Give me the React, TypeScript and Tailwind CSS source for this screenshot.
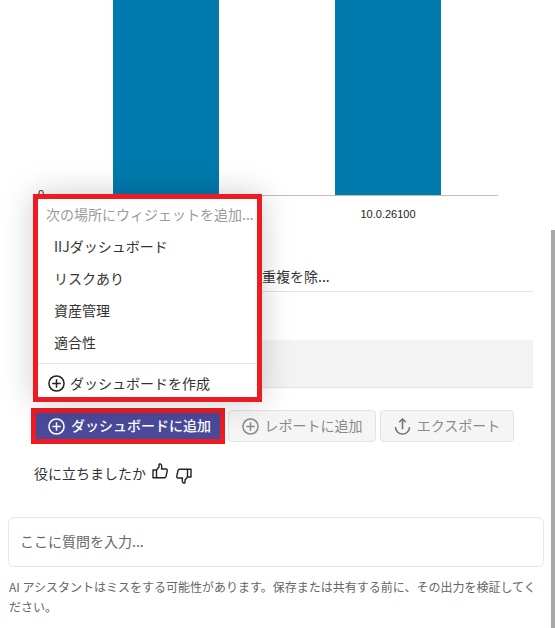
const jp = { fontFamily: '"Noto Sans CJK JP", "Liberation Sans", sans-serif' };

function PlusCircle({ className }: { className: string }) {
  return (
    <svg viewBox="0 0 18 18" fill="none" stroke="currentColor" strokeWidth="1.6" className={className}>
      <circle cx="9" cy="9" r="8" />
      <path d="M9 4.5v9M4.5 9h9" />
    </svg>
  );
}

function UploadIcon({ className }: { className: string }) {
  return (
    <svg viewBox="0 0 18 18" fill="none" stroke="currentColor" strokeWidth="1.7" className={className}>
      <path d="M5.5 4.5 9 1l3.5 3.5M9 1.5V12" />
      <path d="M1.5 9.5a7.5 7.5 0 0 0 15 0" />
    </svg>
  );
}

function Thumb({ className }: { className: string }) {
  return (
    <svg viewBox="0 0 16 16" fill="none" stroke="currentColor" strokeWidth="1.4" strokeLinejoin="round" className={className}>
      <path d="M1 7h3.5v7.7H1z" />
      <path d="M4.5 7 7 4V1.8C7 1 8 .7 8.8 1.2c1 .7 1.2 2.3.7 4.8H14c1 0 1.4.9 1.2 1.8L14 13.5c-.2.8-.7 1.2-1.5 1.2h-8" />
    </svg>
  );
}

function Chart() {
  return (
    <div className="relative h-[222px] shrink-0">
      <div className="absolute left-[38px] top-[187px] text-[11px] leading-[14px] text-[#222]" style={{ fontFamily: '"Liberation Sans", sans-serif' }}>
        0
      </div>
      <div className="ml-[40px] flex h-[196px] w-[458px] border-b border-[#bdbdbd]">
        <div className="ml-[73px] h-full w-[106px] bg-[#0079ad]" />
        <div className="ml-[116px] h-full w-[106px] bg-[#0079ad]" />
      </div>
      <div className="ml-[335px] mt-[11px] w-[106px] text-center text-[11px] leading-[14px] text-[#222]" style={{ fontFamily: '"Liberation Sans", sans-serif' }}>
        10.0.26100
      </div>
    </div>
  );
}

function AddMenu() {
  const items = ['IIJダッシュボード', 'リスクあり', '資産管理', '適合性'];
  return (
    <div className="absolute left-[33px] top-[194px] z-10 h-[208px] w-[229px] border-[5px] border-[#ed1c24] bg-white shadow-[0_0_30px_rgba(0,0,0,0.2)]">
      <div className="h-[32px] whitespace-nowrap pl-[8px] text-[14px] leading-[30px] text-[#9a9a9a]">次の場所にウィジェットを追加...</div>
      <div>
        {items.map((item) => (
          <div key={item} className="h-[32px] pl-[16px] text-[14px] leading-[30px] text-[#333]">
            {item}
          </div>
        ))}
      </div>
      <div className="mt-[4px] flex items-center gap-[5px] border-t border-[#e6e6e6] pl-[10px] pt-[9px] text-[14px] leading-[20px] text-[#333]">
        <PlusCircle className="h-[17px] w-[17px] text-[#222]" />
        <span>ダッシュボードを作成</span>
      </div>
    </div>
  );
}

export default function App() {
  return (
    <div className="relative h-[628px] w-[555px] overflow-hidden bg-white" style={jp}>
      <AddMenu />
      <div className="absolute right-0 top-[230px] h-[398px] w-[4px] bg-[#a8a8a8]" />

      <Chart />

      <div className="ml-[262px] mr-[22px] h-[70px] border-b border-[#e3e3e3] pt-[43px] text-[14px] leading-[22px] text-[#333]">
        重複を除...
      </div>

      <div className="ml-[34px] mr-[22px] mt-[48px] h-[48px] border-b border-[#e3e3e3] bg-[#f3f3f3]" />

      <div className="ml-[31px] mt-[20px] flex items-center gap-[3px]">
        <div className="flex h-[36px] w-[194px] items-center gap-[6px] border-[5px] border-[#ed1c24] bg-[#4b4a9a] pl-[12px] text-[14px] font-medium text-white">
          <PlusCircle className="h-[17px] w-[17px] shrink-0" />
          <span className="mb-[2px] whitespace-nowrap">ダッシュボードに追加</span>
        </div>
        <div className="flex h-[32px] w-[148px] items-center justify-center gap-[6px] rounded-[4px] border border-[#e3e3e3] bg-[#f5f5f5] text-[14px] text-[#8a8a8a]">
          <PlusCircle className="h-[17px] w-[17px]" />
          <span className="mb-[2px]">レポートに追加</span>
        </div>
        <div className="ml-[1px] flex h-[32px] w-[134px] items-center justify-center gap-[6px] rounded-[4px] border border-[#e3e3e3] bg-[#f5f5f5] text-[14px] text-[#8a8a8a]">
          <UploadIcon className="h-[17px] w-[17px] text-[#777]" />
          <span className="mb-[2px]">エクスポート</span>
        </div>
      </div>

      <div className="ml-[34px] mt-[18px] flex h-[22px] items-center text-[14px] leading-[22px] text-[#333]">
        <span>役に立ちましたか</span>
        <Thumb className="mb-[4px] ml-[6px] h-[16px] w-[16px] text-[#222]" />
        <Thumb className="ml-[8px] mt-[5px] h-[16px] w-[16px] rotate-180 text-[#222]" />
      </div>

      <div className="mx-[8px] mt-[33px] flex h-[50px] w-[536px] items-center rounded-[6px] border border-[#e6e6e6] pb-[2px] pl-[11px] text-[14px] text-[#666]">
        ここに質問を入力...
      </div>

      <p className="ml-[9px] mr-[12px] mt-[10px] text-[12px] leading-[20px] text-[#666]">
        AI アシスタントはミスをする可能性があります。保存または共有する前に、その出力を検証してください。
      </p>
    </div>
  );
}
